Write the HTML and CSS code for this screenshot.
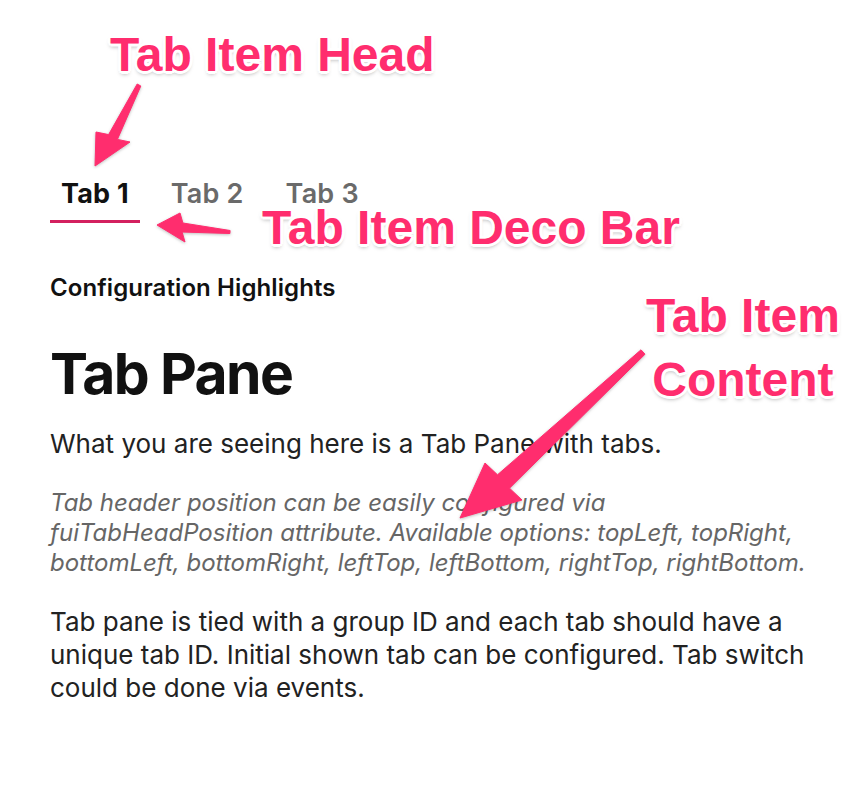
FILE: index.html
```html
<!DOCTYPE html>
<html>
<head>
<meta charset="utf-8">
<link rel="stylesheet" href="styles.css">
</head>
<body>
<div class="page">
  <div class="tabs">
    <div class="tab active">Tab 1</div>
    <div class="tab">Tab 2</div>
    <div class="tab">Tab 3</div>
  </div>
  <div class="content">
    <div class="subtitle">Configuration Highlights</div>
    <h1 class="title">Tab Pane</h1>
    <p class="text">What you are seeing here is a Tab Pane with tabs.</p>
    <p class="text note">Tab header position can be easily configured via fuiTabHeadPosition attribute. Available options: topLeft, topRight, bottomLeft, bottomRight, leftTop, leftBottom, rightTop, rightBottom.</p>
    <p class="text">Tab pane is tied with a group ID and each tab should have a unique tab ID. Initial shown tab can be configured. Tab switch could be done via events.</p>
  </div>

  <svg class="arrows" width="866" height="800" viewBox="0 0 866 800">
    <g class="arrow">
      <polygon points="137.2,84 140.8,86 117.4,139.4 130,142 95,166 96,132 108.6,134.6"/>
      <polygon points="230.1,230.5 182.9,223 180,213 157,225 185,242 182.1,232 229.9,233.5"/>
      <polygon points="641,349.8 645,354.2 509.5,488.2 522,500 460,518 485,463 497.5,474.8"/>
    </g>
  </svg>
  <div class="label label-head">Tab Item Head</div>
  <div class="label label-deco">Tab Item Deco Bar</div>
  <div class="label label-content">Tab Item<br>Content</div>
</div>
</body>
</html>
```
FILE: styles.css
```css
html, body {
  margin: 0;
  padding: 0;
  background: #ffffff;
}
.page {
  position: relative;
  width: 866px;
  height: 800px;
  overflow: hidden;
  font-family: Inter, "Noto Sans", sans-serif;
}
.tabs {
  display: flex;
  gap: 20px;
  padding: 172px 0 0 50px;
}
.tab {
  font-size: 27px;
  line-height: 32px;
  font-weight: 600;
  letter-spacing: 0.2px;
  color: #6a6a6a;
  padding: 6px 11px 10px;
  border-bottom: 3px solid transparent;
}
.tab.active {
  color: #111111;
  font-weight: 700;
  border-bottom-color: #d3205f;
}
.content {
  padding: 50px 0 0 50px;
  width: 785px;
}
.subtitle {
  font-size: 24px;
  line-height: 29px;
  font-weight: 600;
  letter-spacing: 0.1px;
  color: #111111;
}
.title {
  margin: 37px 0 0;
  font-size: 57px;
  line-height: 69px;
  font-weight: 700;
  color: #111111;
  letter-spacing: -1.6px;
}
.text {
  margin: 19px 0 0;
  font-size: 26px;
  line-height: 33px;
  color: #222222;
}
.note {
  margin-top: 28px;
  font-size: 24px;
  line-height: 30px;
  font-style: italic;
  color: #666666;
}
.note + .text {
  margin-top: 27px;
}
.arrows {
  position: absolute;
  left: 0;
  top: 0;
}
.arrow {
  fill: #ff2d6e;
  stroke: #ff2d6e;
  stroke-width: 1;
  stroke-linejoin: round;
  filter: drop-shadow(0 1px 1.5px rgba(0,0,0,0.25));
}
.label {
  position: absolute;
  font-family: "Liberation Sans", Arial, sans-serif;
  font-weight: 700;
  font-size: 48px;
  line-height: 64px;
  color: #ff2d6e;
  text-shadow:
    3px 0 0 #fff, -3px 0 0 #fff, 0 3px 0 #fff, 0 -3px 0 #fff,
    2px 2px 0 #fff, -2px 2px 0 #fff, 2px -2px 0 #fff, -2px -2px 0 #fff,
    0 3px 4px rgba(0,0,0,0.35);
  white-space: nowrap;
}
.label-head {
  left: 110px;
  top: 23px;
}
.label-deco {
  left: 262px;
  top: 196px;
}
.label-content {
  left: 646px;
  top: 284px;
  text-align: center;
}
```
